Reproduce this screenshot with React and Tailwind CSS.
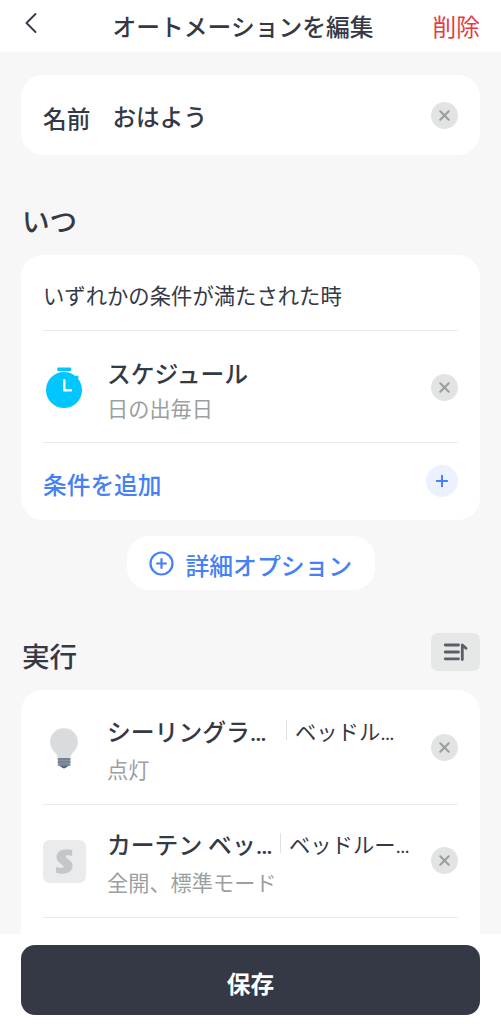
function RemoveButton({ className = "" }) {
  return (
    <button aria-label="削除" className={`flex h-[27px] w-[27px] shrink-0 items-center justify-center rounded-full bg-[#e2e4e4] ${className}`}>
      <svg width="11" height="11" viewBox="0 0 11 11" fill="none" stroke="#999d9f" strokeWidth="2" strokeLinecap="round">
        <path d="M1.3 1.3l8.4 8.4M9.7 1.3l-8.4 8.4" />
      </svg>
    </button>
  );
}

function TimerIcon() {
  return (
    <svg width="43" height="43" viewBox="0 0 43 43" className="mt-[3px] shrink-0">
      <rect x="14.2" y="0.6" width="14" height="3.4" rx="1.2" fill="#00c6ff" />
      <circle cx="21" cy="23" r="18" fill="#00c6ff" />
      <path d="M30.5 10.5l3.5-2.3 1.9 1.9-2.5 2.8z" fill="#00c6ff" />
      <path d="M21.3 13.2v10H28" fill="none" stroke="#fff" strokeWidth="2.4" strokeLinecap="round" strokeLinejoin="round" />
    </svg>
  );
}

function BulbIcon() {
  return (
    <svg width="43" height="43" viewBox="0 0 43 43" className="-mt-[3px] shrink-0">
      <path d="M21 1.2C13 1.2 7.1 7.3 7.1 14.8c0 6.2 3.6 9.2 6 12.1 1.3 1.6 1.7 3.2 1.9 4.6h12c.2-1.4.6-3 1.9-4.6 2.4-2.9 6-5.9 6-12.1C34.9 7.3 29 1.2 21 1.2z" fill="#d8dcde" />
      <path d="M15 31h12.2v6.8L23 40.6q-2 1.2-4 0l-4-2.8z" fill="#8390a0" />
      <path d="M15 32h12.2M14.8 35h12.6M15 38h12.2" stroke="#6b7684" strokeWidth="1.1" strokeLinecap="round" />
      <path d="M17 39h8l-2.3 1.7q-1.7 1-3.4 0z" fill="#5d6875" />
    </svg>
  );
}

function SwitchBotIcon() {
  return (
    <svg width="43" height="43" viewBox="0 0 43 43" className="-mt-[3px] shrink-0">
      <rect width="43" height="43" rx="6.5" fill="#e9ebec" />
      <path d="M29.2 9.9v6c-2.3-.7-5-1-6-.3-.8.6-.5 1.4.4 2.2l3.2 2.7c2.1 1.8 3 3.7 2.7 6.1-.6 4.7-4.2 7.1-9.8 7.1-2.5 0-4.8-.3-6.700-.9v-5.900c2.600.9 5.800 1.300 7.100.6.800-.5.500-1.300-.4-2.100l-3.400-2.900c-2.100-1.800-3-3.700-2.700-6.100.5-4.500 3.900-6.900 9.200-6.900 2.400 0 4.600 0 6.400.4z" fill="#c3c7c9" />
    </svg>
  );
}

function ActionRow({ icon, title, titleClass, room, detail }) {
  return (
    <div className="flex h-[113px] items-center border-b border-[#ebebec] pt-[3px]">
      {icon}
      <div className="ml-[21px] min-w-0 flex-1 pt-[2px]">
        <div className="flex h-[30px] items-center whitespace-nowrap">
          <span className={`shrink-0 pt-[5px] text-[23.8px] leading-[30px] font-medium ${titleClass}`}>{title}</span>
          <span className="-mt-[2px] h-5 w-px shrink-0 bg-[#dfe1e3]" />
          <span className="ml-[8px] pt-[4px] text-[21.3px] leading-[30px]">{room}</span>
        </div>
        <p className="mt-[8px] pt-[2px] text-[21.2px] leading-[30px] text-[#9b9fa2]">{detail}</p>
      </div>
      <RemoveButton className="-mt-[4px]" />
    </div>
  );
}

export default function App() {
  return (
    <div className="flex h-[1024px] w-[501px] flex-col overflow-hidden bg-[#f7f7f7] font-['Roboto','Noto_Sans_CJK_JP',sans-serif] text-[#353945]">
      <header className="grid h-[52px] shrink-0 grid-cols-[90px_1fr_105px] items-center bg-white px-[21px]">
        <button aria-label="戻る" className="mb-[6px]">
          <svg width="20" height="22" viewBox="0 0 20 22" fill="none" stroke="#353945" strokeWidth="1.9" strokeLinecap="round" strokeLinejoin="round">
            <path d="M14.5 2L5.5 11l9 9" />
          </svg>
        </button>
        <h1 className="pt-[3px] text-center text-[23.75px] leading-[30px] font-medium whitespace-nowrap">オートメーションを編集</h1>
        <button className="pt-[3px] text-right text-[23.7px] leading-[30px] text-[#e63b3f]">削除</button>
      </header>

      <main className="min-h-0 flex-1 overflow-hidden px-[21px] pt-[23px]">
        <section className="flex h-[80px] items-center rounded-[22px] bg-white px-[22px] text-[23.7px] leading-[30px] font-medium">
          <span className="pt-[10px]">名前</span>
          <span className="ml-[22px] flex-1 pt-[6px]">おはよう</span>
          <RemoveButton />
        </section>

        <h2 className="flex h-[100px] items-center pt-[36px] pl-px text-[27.6px] leading-[36px] font-medium">いつ</h2>

        <section className="h-[265px] rounded-[22px] bg-white px-[22px]">
          <p className="flex h-[76px] items-center border-b border-[#ebebec] pt-[8px] text-[21.35px] leading-[30px]">いずれかの条件が満たされた時</p>
          <div className="flex h-[112px] items-center border-b border-[#ebebec]">
            <TimerIcon />
            <div className="ml-[21px] flex-1 pt-[12px]">
              <h3 className="text-[23.8px] leading-[30px] font-medium">スケジュール</h3>
              <p className="mt-[5px] text-[21.2px] leading-[30px] text-[#9b9fa2]">日の出毎日</p>
            </div>
            <RemoveButton className="mt-px" />
          </div>
          <div className="flex h-[77px] items-center justify-between text-[#4480f6]">
            <span className="pt-[8px] text-[23.7px] leading-[30px] font-medium">条件を追加</span>
            <button aria-label="条件を追加" className="-mt-[2px] flex h-8 w-8 items-center justify-center rounded-full bg-[#ebf1fe]">
              <svg width="14" height="14" viewBox="0 0 14 14" stroke="#4480f6" strokeWidth="2" strokeLinecap="round">
                <path d="M7 1.8v10.4M1.8 7h10.4" />
              </svg>
            </button>
          </div>
        </section>

        <button className="mx-auto mt-4 flex h-[54px] w-[248px] items-center rounded-[22px] bg-white pl-[22px] text-[#4480f6]">
          <svg width="25" height="25" viewBox="0 0 25 25" fill="none" stroke="#4480f6" strokeWidth="2.2" strokeLinecap="round">
            <circle cx="12.5" cy="12.5" r="11" />
            <path d="M12.5 8v9M8 12.5h9" />
          </svg>
          <span className="ml-[12px] pt-[8px] text-[23.8px] leading-[30px] font-medium">詳細オプション</span>
        </button>

        <div className="flex h-[100px] items-center justify-between pt-[24px]">
          <h2 className="pt-[12px] pl-px text-[27.6px] leading-[36px] font-medium">実行</h2>
          <button aria-label="並べ替え" className="flex h-[38px] w-[49px] items-center justify-center rounded-[7px] bg-[#e6e8e8]">
            <svg width="26" height="20" viewBox="0 0 26 20" fill="none" stroke="#5b5e69" strokeWidth="2.8" strokeLinecap="round" strokeLinejoin="round">
              <path d="M2.2 3h13.3M2.2 10h13.3M2.2 16.8h13.3M19.3 17.5V3L23 6.3" />
            </svg>
          </button>
        </div>

        <section className="h-[300px] rounded-t-[22px] bg-white px-[22px] pt-[2px]">
          <ActionRow icon={<BulbIcon />} title="シーリングラ…" titleClass="w-[179px]" room="ベッドル…" detail="点灯" />
          <ActionRow icon={<SwitchBotIcon />} title="カーテン ベッ…" titleClass="w-[173px]" room="ベッドルー…" detail="全開、標準モード" />
        </section>
      </main>

      <footer className="h-[90px] shrink-0 bg-white px-[21px] pt-[11px]">
        <button className="flex h-[70px] w-full items-center justify-center rounded-[14px] bg-[#353945] pt-[9px] text-[23.7px] leading-[30px] font-bold text-white">保存</button>
      </footer>
    </div>
  );
}
